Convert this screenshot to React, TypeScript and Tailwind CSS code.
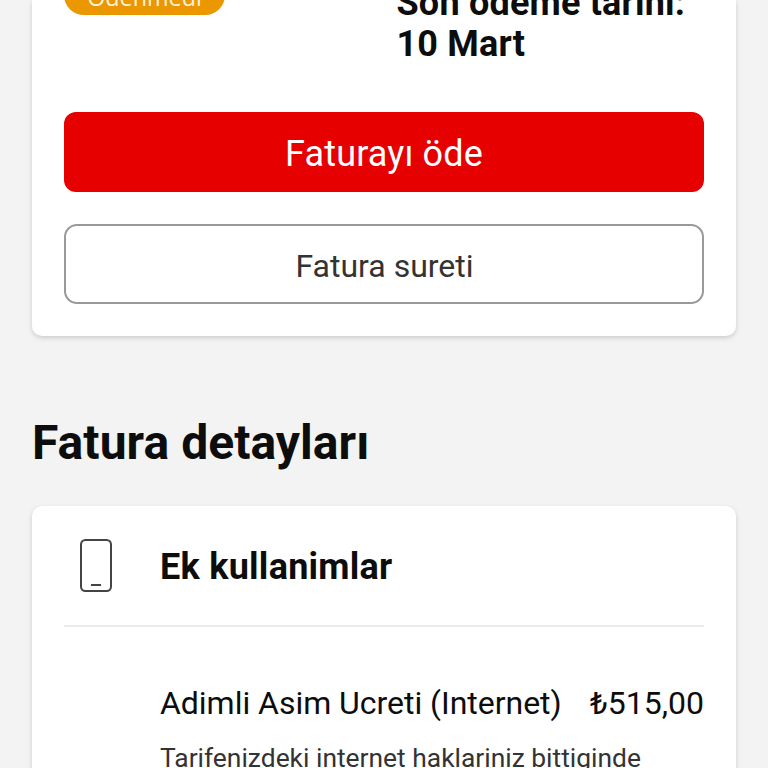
export default function App() {
  return (
    <main className="h-screen overflow-hidden bg-[#f3f3f3] px-8 font-['Roboto',sans-serif] text-[#0d0d0d]">
      {/* Payment summary */}
      <section className="h-[336px] rounded-b-[10px] bg-white px-8 shadow-[0_2px_5px_rgba(0,0,0,0.16)]">
        <div className="flex h-28 items-start">
          <div className="w-[332.5px]">
            <span className="-mt-[25px] flex h-10 w-[161px] items-center justify-center rounded-full bg-[#eb9700] pt-[5px] font-['Open_Sans',sans-serif] text-[23.3px] text-[#fff3dc]">
              Ödenmedi
            </span>
          </div>
          <p className="-mt-[17px] text-[36px] leading-[41px] font-bold tracking-[0.2px] whitespace-nowrap">
            Son ödeme tarihi:
            <br />
            10 Mart
          </p>
        </div>
        <button className="flex h-20 w-full items-center justify-center rounded-xl bg-[#e60000] pt-1 text-[36px] tracking-[0.15px] text-white">
          Faturayı öde
        </button>
        <button className="mt-8 flex h-20 w-full items-center justify-center rounded-[13px] border-2 border-[#999] pt-[3px] pl-px text-[32px] text-[#333]">
          Fatura sureti
        </button>
      </section>

      <h1 className="mt-[79px] h-[91px] text-[48px] leading-[56px] font-bold tracking-[0.05px]">Fatura detayları</h1>

      {/* Invoice lines */}
      <section className="h-[400px] rounded-[10px] bg-white px-8 shadow-[0_2px_5px_rgba(0,0,0,0.16)]">
        <div className="flex h-[121px] items-center border-b-2 border-[#ebebeb]">
          <svg className="ml-4 h-[53px] w-8" viewBox="0 0 32 53" fill="none" stroke="#444" strokeWidth="2">
            <rect x="1" y="1" width="30" height="51" rx="4.5" />
            <path d="M11 46h10" />
          </svg>
          <h2 className="mt-[3px] ml-12 text-[36px] font-bold tracking-[0.25px]">Ek kullanimlar</h2>
        </div>
        <div className="mt-[56px] ml-24 flex justify-between text-[32px] leading-[40px] whitespace-nowrap">
          <span className="tracking-[-0.03px]">Adimli Asim Ucreti (Internet)</span>
          <span>₺515,00</span>
        </div>
        <p className="mt-[17px] ml-24 text-[26.4px] leading-[36px] whitespace-nowrap text-[#333]">
          Tarifenizdeki internet haklariniz bittiginde
        </p>
      </section>
    </main>
  );
}
